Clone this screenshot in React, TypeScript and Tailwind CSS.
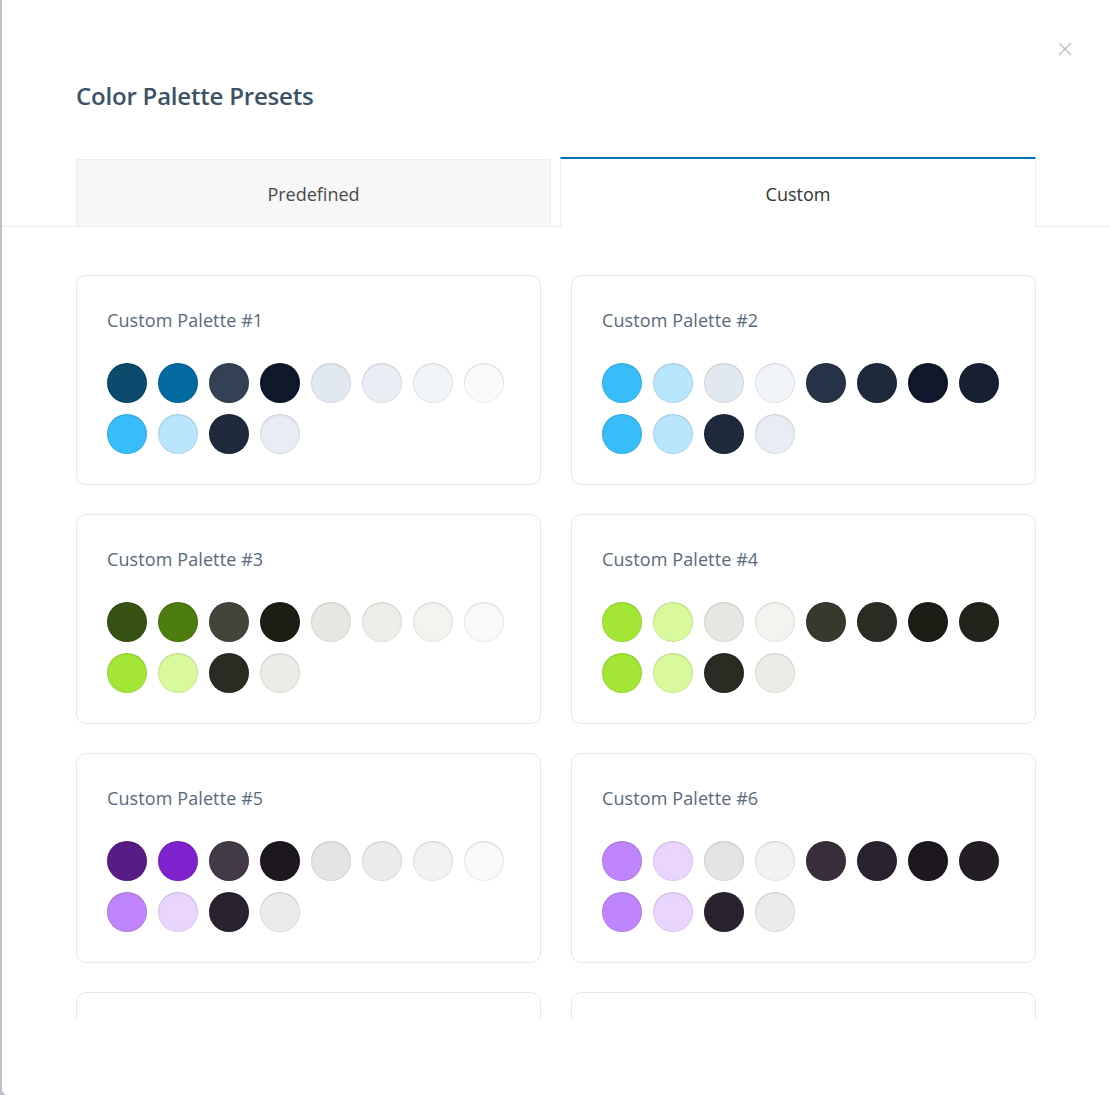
import { useState } from 'react';

const palettes: { name: string; colors: string[] }[] = [
  {
    name: 'Custom Palette #1',
    colors: ['#0c4a6e', '#0369a1', '#334155', '#0f172a', '#e2e8f0', '#e9eef4', '#f1f5f9', '#f8fafc', '#38bdf8', '#bae6fd', '#1e293b', '#e8edf4'],
  },
  {
    name: 'Custom Palette #2',
    colors: ['#38bdf8', '#bae6fd', '#e2e8f0', '#f1f5f9', '#263245', '#1e293b', '#0f172a', '#172033', '#38bdf8', '#bae6fd', '#1e293b', '#e8edf4'],
  },
  {
    name: 'Custom Palette #3',
    colors: ['#365314', '#4d7c0f', '#44453a', '#1c1d15', '#e7e7e2', '#eeeee9', '#f3f3ef', '#f9f9f7', '#a3e635', '#d9f99d', '#2a2b22', '#ecece7'],
  },
  {
    name: 'Custom Palette #4',
    colors: ['#a3e635', '#d9f99d', '#e7e7e2', '#f3f3ef', '#38382d', '#2a2b22', '#1c1d15', '#23231b', '#a3e635', '#d9f99d', '#2a2b22', '#ecece7'],
  },
  {
    name: 'Custom Palette #5',
    colors: ['#581c87', '#7e22ce', '#433a47', '#1d171f', '#e4e3e6', '#ebeaed', '#f2f1f4', '#f9f9f9', '#c084fc', '#e9d5ff', '#2b2230', '#ebeaed'],
  },
  {
    name: 'Custom Palette #6',
    colors: ['#c084fc', '#e9d5ff', '#e4e3e6', '#f2f1f4', '#372d3b', '#2b2230', '#1d171f', '#231d25', '#c084fc', '#e9d5ff', '#2b2230', '#ebeaed'],
  },
  {
    name: 'Custom Palette #7',
    colors: ['#7c2d12', '#c2410c', '#44403c', '#1c1917', '#e7e5e4', '#eeeceb', '#f5f5f4', '#fafaf9', '#fb923c', '#fed7aa', '#292524', '#eeeceb'],
  },
  {
    name: 'Custom Palette #8',
    colors: ['#fb923c', '#fed7aa', '#e7e5e4', '#f5f5f4', '#3a3431', '#292524', '#1c1917', '#231f1d', '#fb923c', '#fed7aa', '#292524', '#eeeceb'],
  },
];

export default function App() {
  const [tab, setTab] = useState<'predefined' | 'custom'>('custom');

  return (
    <div className="h-[1095px] w-full bg-[#b9c2cd] flex overflow-hidden" style={{ fontFamily: '"Open Sans", "Noto Sans", sans-serif' }}>
      <div className="relative ml-[2px] flex-1 flex flex-col bg-white rounded-bl-md overflow-hidden">
        {/* Close */}
        <button className="absolute top-[42px] right-[38px] w-[14px] h-[14px] text-[#c3c7cd]">
          <svg viewBox="0 0 14 14" width="14" height="14" fill="none" stroke="currentColor" strokeWidth="1.6" strokeLinecap="round">
            <path d="M1.5 1.5l11 11M12.5 1.5l-11 11" />
          </svg>
        </button>

        {/* Header */}
        <div className="px-[74px] pt-[80px]">
          <h2 className="text-[24px] leading-[32px] font-semibold text-[#3b5267] tracking-[-0.2px]">Color Palette Presets</h2>
        </div>

        {/* Tabs */}
        <div className="mt-[45px] border-b border-[#ececec] px-[74px] flex gap-[9px] items-end">
          <button
            onClick={() => setTab('predefined')}
            className="w-[475px] h-[68px] -mb-px pt-[2px] bg-[#f7f7f7] border border-[#ececec] text-[18px] text-[#4a4a4a]"
          >
            Predefined
          </button>
          <button
            onClick={() => setTab('custom')}
            className="w-[476px] h-[70px] -mb-px pt-[2px] bg-white border-x border-[#ececec] border-t-2 border-t-[#0073b8] text-[18px] text-[#333]"
          >
            Custom
          </button>
        </div>

        {/* Palettes */}
        <div className="h-[793px] overflow-hidden px-[74px] pt-[48px]">
          <div className="grid grid-cols-2 gap-x-[30px] gap-y-[29px]">
            {palettes.map((p) => (
              <div key={p.name} className="border border-[#e9e9e9] rounded-[10px] px-[30px] pt-[32px] pb-[30px]">
                <div className="text-[18px] leading-[24px] text-[#5a6a7a] mb-[31px] tracking-[0.1px]">{p.name}</div>
                <div className="grid grid-cols-[repeat(8,40px)] gap-x-[11px] gap-y-[11px]">
                  {p.colors.map((c, i) => (
                    <span
                      key={i}
                      className="w-[40px] h-[40px] rounded-full shadow-[inset_0_1px_2px_rgba(0,0,0,0.1),inset_0_0_0_1px_rgba(0,0,0,0.05)]"
                      style={{ backgroundColor: c }}
                    />
                  ))}
                </div>
              </div>
            ))}
          </div>
        </div>
      </div>
    </div>
  );
}
